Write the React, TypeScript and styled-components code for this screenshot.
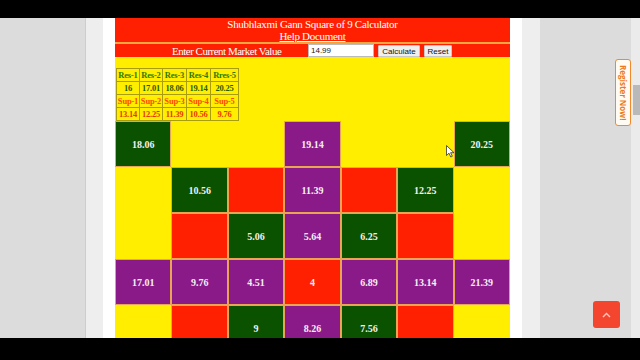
import React from "react";
import styled, { createGlobalStyle } from "styled-components";

const GlobalStyle = createGlobalStyle`
  html, body { margin: 0; padding: 0; background: #000; }
  body { width: 640px; height: 360px; overflow: hidden; font-family: "Liberation Serif", "Times New Roman", serif; }
`;

const Frame = styled.div`
  position: relative;
  width: 640px;
  height: 360px;
  display: flex;
  flex-direction: column;
  background: #000;
  overflow: hidden;
`;

const BlackBar = styled.div<{ $h: number }>`
  height: ${(p) => p.$h}px;
  flex: none;
  background: #000;
`;

const Middle = styled.div`
  height: 320px;
  flex: none;
  display: flex;
  overflow: hidden;
`;

const Gutter = styled.div<{ $w?: number; $bg: string }>`
  ${(p) => (p.$w ? `width: ${p.$w}px; flex: none;` : "flex: 1;")}
  background: ${(p) => p.$bg};
`;

const LeftGutter = styled(Gutter)`
  box-shadow: inset -1px 0 0 #cdcdcd;
`;

const Track = styled.div`
  width: 9px;
  flex: none;
  background: #ebebeb;
  display: flex;
  justify-content: flex-end;
`;

const Thumb = styled.div`
  width: 7px;
  height: 30px;
  margin-top: 67px;
  background: #b9b9b9;
`;

const PageWhite = styled.div`
  flex: none;
  background: #fff;
  padding: 0 12px;
`;

const Calculator = styled.div`
  width: 395px;
  background: #ffee00;
`;

const TitleBand = styled.div`
  background: #fe2000;
  color: #fff;
  text-align: center;
  font-size: 11px;
  line-height: 12px;
  letter-spacing: -0.3px;
  border-bottom: 2px solid #f7a640;
`;

const HelpLink = styled.a`
  color: #fff;
  text-decoration: underline;
`;

const InputBand = styled.div`
  background: #fe2000;
  color: #fff;
  height: 13px;
  display: flex;
  align-items: center;
  font-size: 11px;
  padding-left: 57px;
`;

const InputLabel = styled.span`
  width: 136px;
  flex: none;
  line-height: 12px;
  letter-spacing: -0.5px;
`;

const ValueInput = styled.div`
  width: 62px;
  height: 11px;
  background: #fff;
  border: 1px solid #bbb;
  color: #222;
  font-family: "Liberation Sans", Arial, sans-serif;
  font-size: 8px;
  line-height: 11px;
  padding-left: 2px;
  box-sizing: content-box;
`;

const Btn = styled.div<{ $w: number }>`
  width: ${(p) => p.$w}px;
  height: 12px;
  margin-left: 4px;
  background: #efefef;
  border: 1px solid #c8c8c8;
  border-radius: 1px;
  color: #111;
  font-family: "Liberation Sans", Arial, sans-serif;
  font-size: 8px;
  line-height: 12px;
  text-align: center;
  box-sizing: border-box;
`;

const YellowArea = styled.div`
  padding-top: 11px;
`;

const LevelTable = styled.table`
  border-collapse: collapse;
  margin-left: 1px;
  font-weight: bold;
  font-size: 8.5px;
`;

const LevelCell = styled.td<{ $w: number; $c: string }>`
  width: ${(p) => p.$w}px;
  height: 13px;
  padding: 0;
  border: 1px solid #a89c10;
  color: ${(p) => p.$c};
  text-align: center;
  line-height: 11px;
  letter-spacing: -0.2px;
  box-sizing: border-box;
`;

const Grid = styled.div`
  display: grid;
  grid-template-columns: repeat(7, 1fr);
  grid-auto-rows: 46px;
`;

type Kind = "g" | "p" | "r" | "y";
const fills: Record<Kind, string> = {
  g: "#0a5200",
  p: "#8a1a88",
  r: "#fe2000",
  y: "#ffee00",
};

const Cell = styled.div<{ $k: Kind }>`
  background: ${(p) => fills[p.$k]};
  border: 1px solid ${(p) => (p.$k === "y" ? "#ffee00" : "#e9a553")};
  display: flex;
  align-items: center;
  justify-content: center;
  color: #f4f0f4;
  font-weight: bold;
  font-size: 10px;
`;

const RegisterTab = styled.div`
  position: absolute;
  left: 615px;
  top: 59px;
  width: 16px;
  height: 67px;
  box-sizing: border-box;
  background: #fffaf2;
  border: 1px solid #f08a2a;
  border-radius: 3px;
  display: flex;
  align-items: center;
  justify-content: center;
  writing-mode: vertical-rl;
  color: #ec7a1c;
  font-family: "Open Sans", "Liberation Sans", sans-serif;
  font-weight: bold;
  font-size: 8px;
  line-height: 1;
`;

const TopButton = styled.div`
  position: absolute;
  left: 593px;
  top: 301px;
  width: 27px;
  height: 27px;
  border-radius: 3px;
  background: #f4452f;
  display: flex;
  align-items: center;
  justify-content: center;
`;

const Pointer = styled.svg`
  position: absolute;
  left: 446px;
  top: 145px;
`;

const levels = [
  { c: "#2d7a00", v: ["Res-1", "Res-2", "Res-3", "Res-4", "Rres-5"] },
  { c: "#1f5f00", v: ["16", "17.01", "18.06", "19.14", "20.25"] },
  { c: "#ff4a00", v: ["Sup-1", "Sup-2", "Sup-3", "Sup-4", "Sup-5"] },
  { c: "#e43a00", v: ["13.14", "12.25", "11.39", "10.56", "9.76"] },
];
const levelWidths = [23, 23, 24, 24, 28];

const square: [Kind, string][][] = [
  [["g", "18.06"], ["y", ""], ["y", ""], ["p", "19.14"], ["y", ""], ["y", ""], ["g", "20.25"]],
  [["y", ""], ["g", "10.56"], ["r", ""], ["p", "11.39"], ["r", ""], ["g", "12.25"], ["y", ""]],
  [["y", ""], ["r", ""], ["g", "5.06"], ["p", "5.64"], ["g", "6.25"], ["r", ""], ["y", ""]],
  [["p", "17.01"], ["p", "9.76"], ["p", "4.51"], ["r", "4"], ["p", "6.89"], ["p", "13.14"], ["p", "21.39"]],
  [["y", ""], ["r", ""], ["g", "9"], ["p", "8.26"], ["g", "7.56"], ["r", ""], ["y", ""]],
];

export default function App() {
  return (
    <>
      <GlobalStyle />
      <Frame>
        <BlackBar $h={18} />
        <Middle>
          <LeftGutter $w={86} $bg="#dcdcdc" />
          <Gutter $w={17} $bg="#eeeeee" />
          <PageWhite>
            <Calculator>
              <TitleBand>
                <div>Shubhlaxmi Gann Square of 9 Calculator</div>
                <HelpLink href="#">Help Document</HelpLink>
              </TitleBand>
              <InputBand>
                <InputLabel>Enter Current Market Value</InputLabel>
                <ValueInput>14.99</ValueInput>
                <Btn $w={42}>Calculate</Btn>
                <Btn $w={28}>Reset</Btn>
              </InputBand>
              <YellowArea>
                <LevelTable>
                  <tbody>
                    {levels.map((row, i) => (
                      <tr key={i}>
                        {row.v.map((t, j) => (
                          <LevelCell key={j} $w={levelWidths[j]} $c={row.c}>
                            {t}
                          </LevelCell>
                        ))}
                      </tr>
                    ))}
                  </tbody>
                </LevelTable>
                <Grid>
                  {square.flatMap((row, i) =>
                    row.map(([k, t], j) => (
                      <Cell key={`${i}-${j}`} $k={k}>
                        {t}
                      </Cell>
                    ))
                  )}
                </Grid>
              </YellowArea>
            </Calculator>
          </PageWhite>
          <Gutter $w={18} $bg="#eeeeee" />
          <Gutter $bg="#dcdcdc" />
          <Track>
            <Thumb />
          </Track>
        </Middle>
        <BlackBar $h={22} />
        <RegisterTab>Register Now!</RegisterTab>
        <TopButton>
          <svg width="9" height="6" viewBox="0 0 9 6">
            <path d="M1 5 L4.5 1.5 L8 5" fill="none" stroke="#ffc8bc" strokeWidth="1.4" />
          </svg>
        </TopButton>
        <Pointer width="9" height="13" viewBox="0 0 9 13">
          <path d="M0.5 0.5 L0.5 10.5 L3 8.2 L4.8 12 L6.3 11.3 L4.6 7.7 L8 7.7 Z" fill="#fff" stroke="#333" strokeWidth="0.8" />
        </Pointer>
      </Frame>
    </>
  );
}
